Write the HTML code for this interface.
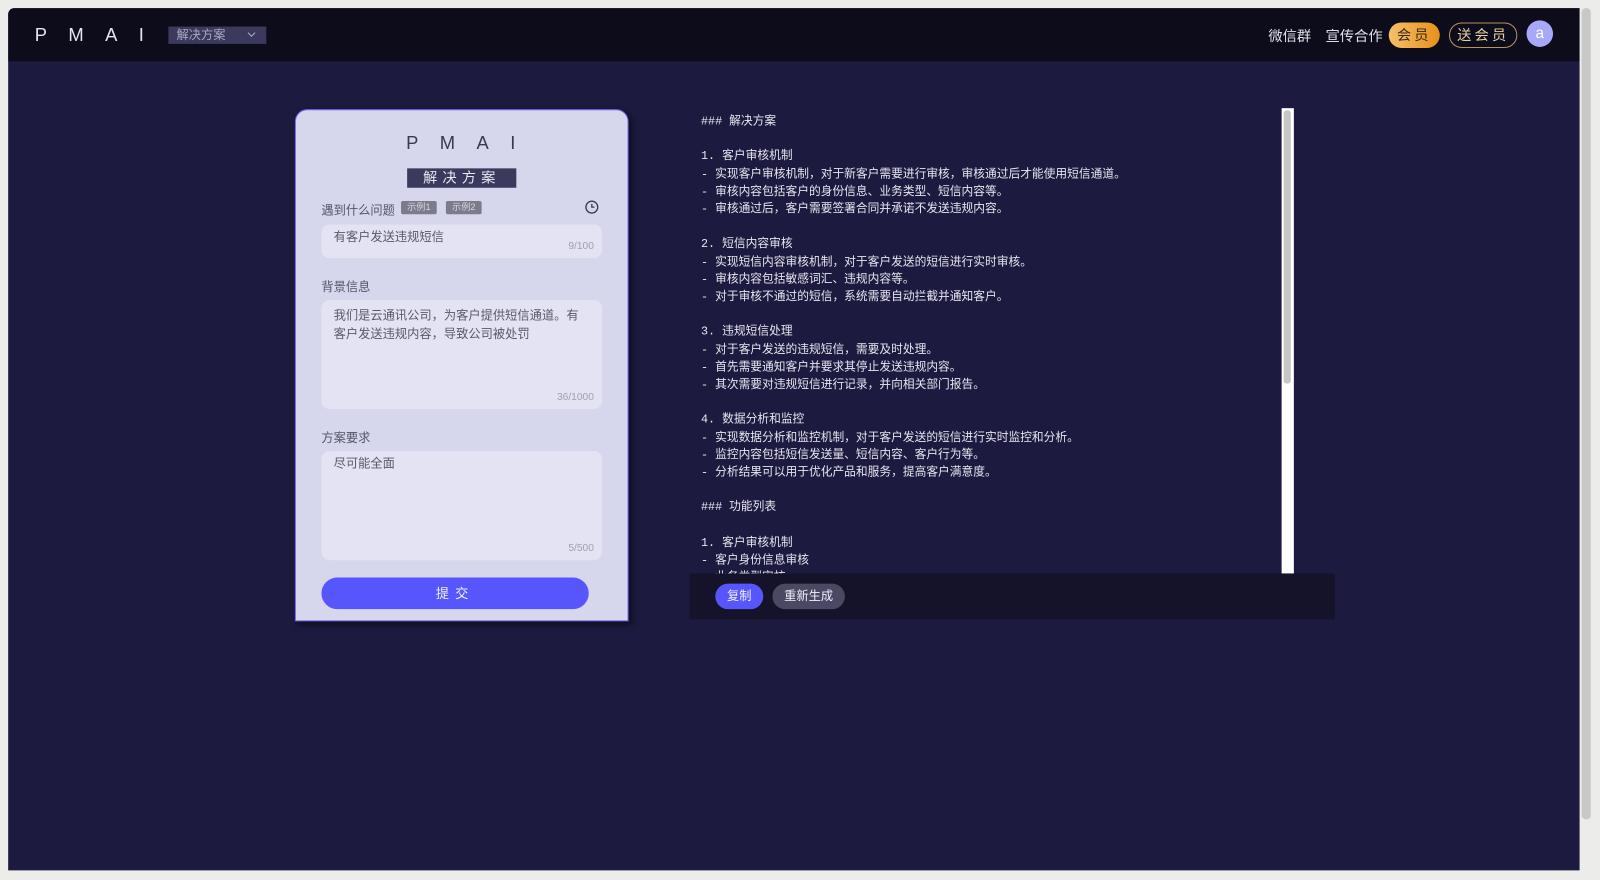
<!DOCTYPE html>
<html><head><meta charset="utf-8"><style>
*{margin:0;padding:0;box-sizing:border-box}
body{width:1600px;height:880px;background:#ececea;font-family:"Liberation Sans","Noto Sans CJK SC",sans-serif;position:relative;overflow:hidden}
.wrap{position:absolute;left:0;top:0;width:1568px;height:862px;transform:scale(1.0204);transform-origin:0 0}
.page{position:absolute;left:8px;top:8px;width:1540px;height:845px;background:#1c1a3e;border-radius:6px 0 0 0;overflow:hidden}
.hdr{position:absolute;left:0;top:0;width:1540px;height:52px;background:#0d0c1a}
.logo{position:absolute;left:26px;top:16px;color:#e6e6ee;font-size:18px;letter-spacing:21px;font-weight:300}
.sel{position:absolute;left:157px;top:18px;width:96px;height:17px;background:#3b3a5c;color:#a9a8c0;font-size:12px;line-height:17px;padding-left:8px}
.sel svg{position:absolute;right:10px;top:5px}
.nav{position:absolute;top:17px;color:#e0e0e8;font-size:14px}
.vip{position:absolute;left:1353px;top:14px;width:50px;height:25px;border-radius:13px;background:linear-gradient(90deg,#f4c06a,#e8901a);color:#3a2a10;font-size:14px;text-align:center;line-height:25px;letter-spacing:3px}
.svip{position:absolute;left:1412px;top:14px;width:67px;height:25px;border-radius:13px;border:1px solid #b7945a;color:#e8d0a0;font-size:14px;text-align:center;line-height:23px;letter-spacing:3px}
.av{position:absolute;left:1488px;top:12px;width:26px;height:26px;border-radius:50%;background:#a8a8f8;color:#fff;text-align:center;line-height:25px;font-size:15px}
.card{position:absolute;left:281px;top:99px;width:327px;height:502px;background:#d6d6ec;border:1.5px solid #6d68ee;border-radius:12px 12px 0 0;box-shadow:3px 3px 6px rgba(0,0,0,.5)}
.clogo{position:absolute;left:108px;top:22px;color:#3a3950;font-size:18px;letter-spacing:21px;font-weight:300}
.ctitle{position:absolute;left:109px;top:57px;width:107px;height:19px;background:#3b3a5c;color:#e8e8f0;font-size:14px;text-align:center;line-height:19px;letter-spacing:5px}
.lbl{position:absolute;left:25px;color:#555468;font-size:12px}
.tag{position:absolute;top:89px;width:35px;height:13px;background:#7c7b8c;color:#d8d8e0;font-size:9px;line-height:13px;text-align:center;border-radius:2px}
.inp{position:absolute;left:25px;width:275px;background:#e3e3f3;border-radius:8px;color:#5a596a;font-size:12px;padding:6px 12px;line-height:18px}
.cnt{position:absolute;right:8px;bottom:2px;color:#a09fb0;font-size:10px}
.sub{position:absolute;left:25px;top:458px;width:262px;height:31px;border-radius:16px;background:#5756fc;color:#f0f0ff;font-size:13px;text-align:center;line-height:31px;letter-spacing:6px}
.out{position:absolute;left:668px;top:98px;width:592px;height:456px;overflow:hidden}
.txt{position:absolute;left:11px;top:5px;color:#e6e6f0;font-size:11.5px;line-height:17.2px;font-family:"Liberation Mono","Noto Sans CJK SC",monospace;white-space:pre}
.sb{position:absolute;left:1248px;top:98px;width:12px;height:456px;background:#fff}
.sb div{position:absolute;left:2px;top:2px;width:7px;height:268px;background:#c6c6c6;border-radius:3px}
.bar{position:absolute;left:668px;top:554px;width:632px;height:45px;background:#141329}
.b{position:absolute;top:10px;height:25px;border-radius:13px;color:#f0f0ff;font-size:12px;text-align:center;line-height:25px}
.vs{position:absolute;left:1550px;top:8px;width:9px;height:795px;background:#c8c8c8;border-radius:4px}
</style></head><body>
<div class="wrap">
<div class="page">
<div class="hdr">
<div class="logo">PMAI</div>
<div class="sel">解决方案<svg width="9" height="6" viewBox="0 0 9 6"><path d="M1 1l3.5 3.5L8 1" stroke="#a9a8c0" fill="none"/></svg></div>
<div class="nav" style="left:1235px">微信群</div>
<div class="nav" style="left:1291px">宣传合作</div>
<div class="vip">会员</div>
<div class="svip">送会员</div>
<div class="av">a</div>
</div>
<div class="card">
<div class="clogo">PMAI</div>
<div class="ctitle">解决方案</div>
<div class="lbl" style="top:89px">遇到什么问题</div>
<div class="tag" style="left:103px">示例1</div>
<div class="tag" style="left:147px">示例2</div>
<svg style="position:absolute;left:283px;top:88px" width="14" height="14" viewBox="0 0 14 14"><circle cx="7" cy="7" r="5.8" stroke="#3a3950" stroke-width="1.3" fill="none"/><path d="M7 3.8V7h2.6" stroke="#3a3950" stroke-width="1.3" fill="none"/></svg>
<div class="inp" style="top:112px;height:33px;padding-top:3px">有客户发送违规短信<span class="cnt">9/100</span></div>
<div class="lbl" style="top:164px">背景信息</div>
<div class="inp" style="top:186px;height:107px">我们是云通讯公司，为客户提供短信通道。有客户发送违规内容，导致公司被处罚<span class="cnt">36/1000</span></div>
<div class="lbl" style="top:312px">方案要求</div>
<div class="inp" style="top:334px;height:107px;padding-top:3px">尽可能全面<span class="cnt">5/500</span></div>
<div class="sub">提交</div>
</div>
<div class="out"><div class="txt">### 解决方案

1. 客户审核机制
- 实现客户审核机制，对于新客户需要进行审核，审核通过后才能使用短信通道。
- 审核内容包括客户的身份信息、业务类型、短信内容等。
- 审核通过后，客户需要签署合同并承诺不发送违规内容。

2. 短信内容审核
- 实现短信内容审核机制，对于客户发送的短信进行实时审核。
- 审核内容包括敏感词汇、违规内容等。
- 对于审核不通过的短信，系统需要自动拦截并通知客户。

3. 违规短信处理
- 对于客户发送的违规短信，需要及时处理。
- 首先需要通知客户并要求其停止发送违规内容。
- 其次需要对违规短信进行记录，并向相关部门报告。

4. 数据分析和监控
- 实现数据分析和监控机制，对于客户发送的短信进行实时监控和分析。
- 监控内容包括短信发送量、短信内容、客户行为等。
- 分析结果可以用于优化产品和服务，提高客户满意度。

### 功能列表

1. 客户审核机制
- 客户身份信息审核
- 业务类型审核</div></div>
<div class="sb"><div></div></div>
<div class="bar">
<div class="b" style="left:25px;width:47px;background:#5756fc">复制</div>
<div class="b" style="left:81px;width:71px;background:#4a4862">重新生成</div>
</div>
</div>
<div class="vs"></div>
</div>
</body></html>
